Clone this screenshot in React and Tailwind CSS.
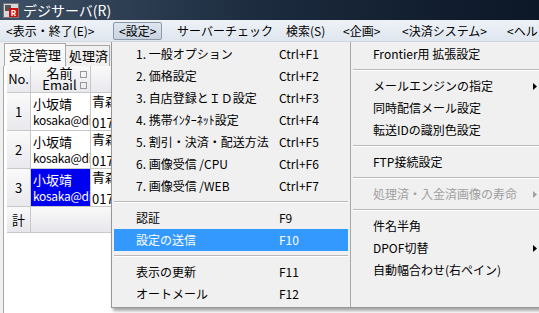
import React from 'react';

// メニュー項目（左列）
const menuA = [
  ['1. 一般オプション', 'Ctrl+F1'],
  ['2. 価格設定', 'Ctrl+F2'],
  ['3. 自店登録とＩＤ設定', 'Ctrl+F3'],
  ['4. 携帯ｲﾝﾀｰﾈｯﾄ設定', 'Ctrl+F4'],
  ['5. 割引・決済・配送方法', 'Ctrl+F5'],
  ['6. 画像受信 /CPU', 'Ctrl+F6'],
  ['7. 画像受信 /WEB', 'Ctrl+F7'],
];
const menuB = [
  ['認証', 'F9'],
  ['設定の送信', 'F10', true],
];
const menuC = [
  ['表示の更新', 'F11'],
  ['オートメール', 'F12'],
];

const topMenu = [
  ['<表示・終了(E)>', 'w-[113px]'],
  ['<設定>', 'w-[58px]', true],
  ['サーバーチェック', 'w-[109px]'],
  ['検索(S)', 'w-[57px]'],
  ['<企画>', 'w-[59px]'],
  ['<決済システム>', 'w-[105px]'],
  ['<ヘルプ>', 'w-[80px]'],
];

const rows = [
  { no: 1, name: '小坂靖', mail: 'kosaka@diesel.jp' },
  { no: 2, name: '小坂靖', mail: 'kosaka@diesel.jp' },
  { no: 3, name: '小坂靖', mail: 'kosaka@diesel.jp', sel: true },
];

function Arrow({ gray }) {
  return (
    <svg width="4" height="7" viewBox="0 0 4 7" className="shrink-0">
      <path d="M0 0 L4 3.5 L0 7 Z" fill={gray ? '#a0a0a0' : '#000'} />
    </svg>
  );
}

function Sep() {
  return (
    <div className="h-[10px] flex flex-col justify-center px-[2px]">
      <div className="h-px bg-[#b9b9b9]" />
      <div className="h-px bg-white" />
    </div>
  );
}

function LeftItem({ label, key2, hi }) {
  return (
    <div className={`h-[22px] mx-[2px] flex items-center pl-[22px] ${hi ? 'bg-[#3399ff] text-white' : 'text-black'}`}>
      <span className="w-[143px] whitespace-nowrap">{label}</span>
      <span className="whitespace-nowrap">{key2}</span>
    </div>
  );
}

function RightItem({ label, sub, gray }) {
  return (
    <div className={`h-[22px] flex items-center justify-between pl-[22px] pr-[6px] ${gray ? 'text-[#a0a0a0]' : 'text-black'}`}>
      <span className="whitespace-nowrap">{label}</span>
      {sub && <Arrow gray={gray} />}
    </div>
  );
}

export default function App() {
  return (
    <div
      className="w-[539px] h-[313px] overflow-hidden relative bg-white text-[12px]"
      style={{ fontFamily: '"Noto Sans CJK JP", "Liberation Sans", sans-serif' }}
    >
      {/* タイトルバー */}
      <div className="h-[20px] flex items-center bg-gradient-to-r from-[#3f5166] via-[#1b2a3d] to-[#0c1727]">
        <div className="ml-[3px] w-[16px] h-[15px] bg-[#d8d8d8] border border-[#777] relative">
          <div className="absolute left-[1px] top-[1px] w-[6px] h-[6px] bg-[#555]" />
          <div className="absolute right-0 bottom-0 w-[9px] h-[9px] bg-[#d01010] text-white text-[8px] leading-[9px] font-bold text-center">R</div>
        </div>
        <span className="ml-[4px] text-white text-[14px] leading-none">デジサーバ(R)</span>
      </div>

      {/* メニューバー */}
      <div className="h-[22px] flex items-center bg-gradient-to-b from-[#eef2f7] to-[#dfe6ef] border-b border-[#d0d8e2]">
        {topMenu.map(([t, w, on]) => (
          <div key={t} className={`${w} shrink-0 h-full flex items-center pl-[6px]`}>
            <span
              className={`whitespace-nowrap leading-[16px] ${on ? '-ml-[6px] px-[5px] h-[18px] flex items-center border border-[#8a98aa] rounded-[2px] bg-gradient-to-b from-[#dfe6ef] to-[#c9d3df]' : ''}`}
            >
              {t}
            </span>
          </div>
        ))}
      </div>

      {/* 本体 */}
      <div className="flex h-[271px]">
        <div className="w-[111px] shrink-0 bg-[#f0f0f0] flex flex-col">
          {/* タブ */}
          <div className="h-[24px] flex items-end pl-[4px] text-[13px]">
            <div className="h-[23px] w-[62px] bg-[#f9f9f9] border-t border-l border-r border-[#a8a8a8] flex items-center justify-center">受注管理</div>
            <div className="h-[21px] w-[44px] border-t border-r border-[#a8a8a8] flex items-center pl-[3px] whitespace-nowrap overflow-hidden">処理済</div>
          </div>
          {/* 表 */}
          <div className="flex-1 ml-[3px] border-l border-[#a8a8a8] bg-white pl-[3px] text-[13px] overflow-hidden">
            <div className="flex h-[27px] border-b border-[#c8c8c8] bg-gradient-to-b from-[#fafafa] to-[#e9e9ee]">
              <div className="w-[24px] border-r border-[#c8c8c8] flex items-center justify-center">No.</div>
              <div className="w-[60px] border-r border-[#c8c8c8] flex flex-col items-center justify-center leading-[12px] relative">
                <span className="pr-[2px]">名前</span>
                <span className="pr-[2px]">Email</span>
                <div className="absolute right-[3px] top-[5px] w-[7px] h-[7px] border border-[#999]" />
                <div className="absolute right-[3px] top-[16px] w-[7px] h-[7px] border border-[#999]" />
              </div>
              <div className="flex-1" />
            </div>
            {rows.map((r) => (
              <div key={r.no} className="flex h-[38px] border-b border-[#c8c8c8]">
                <div className="w-[24px] border-r border-[#c8c8c8] bg-gradient-to-b from-[#fafafa] to-[#e9e9ee] flex items-center justify-center">{r.no}</div>
                <div className={`w-[60px] border-r border-[#c8c8c8] overflow-hidden flex flex-col justify-center pl-[2px] leading-[16px] whitespace-nowrap ${r.sel ? 'bg-[#0000f0] text-white' : ''}`}>
                  <span>{r.name}</span>
                  <span className="text-[12px] tracking-[-0.3px]">{r.mail}</span>
                </div>
                <div className="flex-1 overflow-hidden whitespace-nowrap flex flex-col justify-between pl-px leading-[15px]">
                  <span>青森県</span>
                  <span>0178</span>
                </div>
              </div>
            ))}
            <div className="flex h-[26px] border-b border-[#c8c8c8] bg-gradient-to-b from-[#fafafa] to-[#e6e6ec]">
              <div className="w-[24px] border-r border-[#c8c8c8] flex items-center justify-center">計</div>
            </div>
          </div>
        </div>
        <div className="flex-1" />
      </div>

      {/* ドロップダウンメニュー */}
      <div className="absolute left-[111px] top-[42px] h-[266px] flex bg-[#f0f0f0] border-l border-b border-[#979797] shadow-[2px_3px_3px_rgba(0,0,0,0.35)]">
        <div className="w-[238px] pt-px">
          {menuA.map(([a, b]) => <LeftItem key={a} label={a} key2={b} />)}
          <Sep />
          {menuB.map(([a, b, h]) => <LeftItem key={a} label={a} key2={b} hi={h} />)}
          <Sep />
          {menuC.map(([a, b]) => <LeftItem key={a} label={a} key2={b} />)}
        </div>
        <div className="w-px bg-[#a8a8a8]" />
        <div className="w-[192px] pt-px">
          <RightItem label="Frontier用 拡張設定" />
          <Sep />
          <RightItem label="メールエンジンの指定" sub />
          <RightItem label="同時配信メール設定" />
          <RightItem label="転送IDの識別色設定" />
          <Sep />
          <RightItem label="FTP接続設定" />
          <Sep />
          <RightItem label="処理済・入金済画像の寿命" sub gray />
          <Sep />
          <RightItem label="件名半角" />
          <RightItem label="DPOF切替" sub />
          <RightItem label="自動幅合わせ(右ペイン)" />
        </div>
      </div>
    </div>
  );
}
